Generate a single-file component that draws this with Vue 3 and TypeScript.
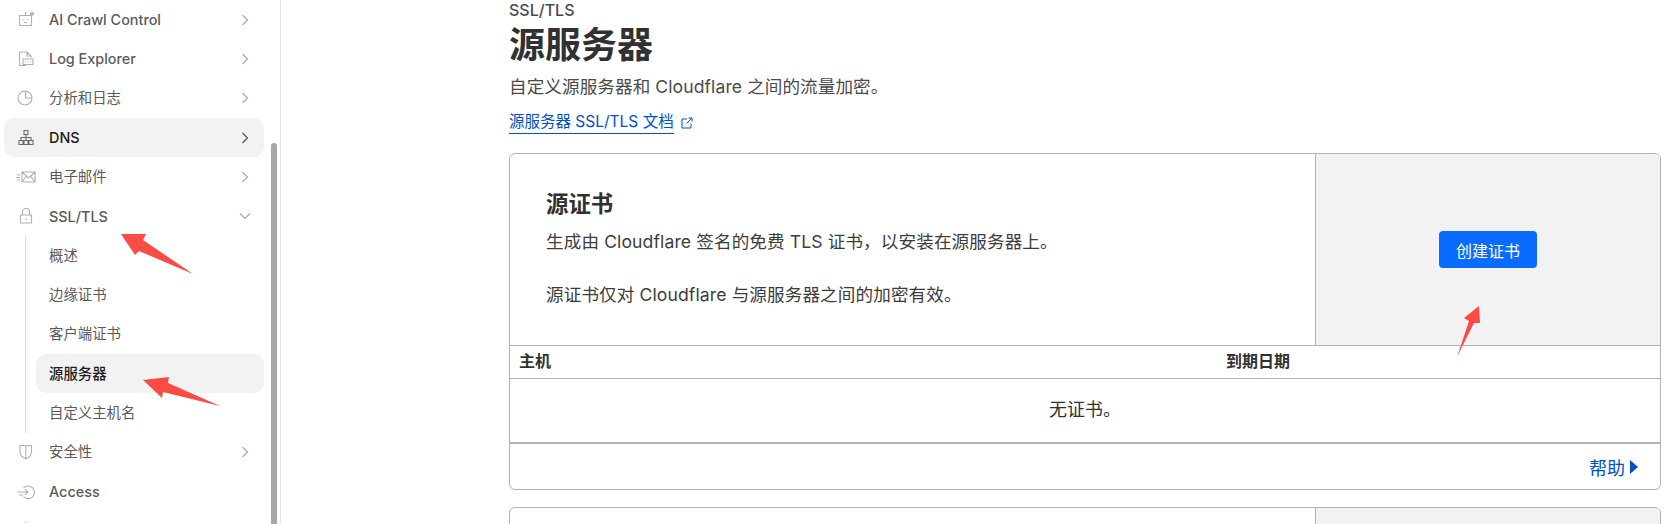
<template>
  <div class="page">
    <aside class="sidebar">
      <nav class="nav">
        <template v-for="item in navItems" :key="item.label">
          <a class="nav-row" :class="{ hover: item.hover }">
            <svg class="nav-icon" viewBox="0 0 20 20" fill="none">
              <path :d="item.icon" />
            </svg>
            <span class="nav-label" :class="{ cjk: isCjk(item.label) }">{{ item.label }}</span>
            <svg v-if="item.arrow" class="chev" :class="{ open: item.open }" viewBox="0 0 12 12" fill="none">
              <path d="M3.5 1 L8.5 6 L3.5 11" />
            </svg>
          </a>
          <div v-if="item.open" class="sub">
            <a v-for="s in subItems" :key="s" class="sub-row" :class="{ hover: s === '源服务器' }">{{ s }}</a>
          </div>
        </template>
      </nav>
      <div class="scroll-thumb"></div>
    </aside>

    <main class="main">
      <div class="crumb">SSL/TLS</div>
      <h1 class="title">源服务器</h1>
      <p class="desc">自定义源服务器和 Cloudflare 之间的流量加密。</p>
      <div class="doc-line">
        <a class="doc-link">源服务器 SSL/TLS 文档</a>
        <svg class="ext" viewBox="0 0 12 12" fill="none">
          <path d="M6 2 H1 V11 H10 V6.5 M5.5 6.5 L11 1 M7.5 1 H11 V4.5" />
        </svg>
      </div>

      <section class="card">
        <div class="card-top">
          <div class="card-info">
            <h2>源证书</h2>
            <p>生成由 Cloudflare 签名的免费 TLS 证书，以安装在源服务器上。</p>
            <p>源证书仅对 Cloudflare 与源服务器之间的加密有效。</p>
          </div>
          <div class="card-action">
            <button class="primary">创建证书</button>
          </div>
        </div>
        <div class="table-head">
          <span>主机</span>
          <span>到期日期</span>
        </div>
        <div class="table-empty">无证书。</div>
        <div class="card-foot">
          <a class="help">帮助<i class="tri"></i></a>
        </div>
      </section>

      <section class="card next">
        <div class="card-top">
          <div class="card-info"></div>
          <div class="card-action"></div>
        </div>
      </section>
    </main>

    <svg class="arrows" viewBox="0 0 1676 524">
      <polygon v-for="a in arrows" :key="a" :points="a" />
    </svg>
  </div>
</template>

<script setup lang="ts">
interface NavItem {
  label: string
  icon: string
  arrow?: boolean
  open?: boolean
  hover?: boolean
}

const navItems: NavItem[] = [
  {
    label: 'AI Crawl Control',
    arrow: true,
    icon: 'M3.5 5.5 H15.5 V15.5 H3.5 Z M9.5 5.5 V2 M7 9 V10 M12 9 V10 M8 12.5 H11 M16 1.5 V6 M14 3 L18 4.8 M18 3 L14 4.8',
  },
  {
    label: 'Log Explorer',
    arrow: true,
    icon: 'M10 16.5 H3.5 V3 H11 L15 7 V9 M11 3 V7 H15 M7 10 H17 V15.5 H7 Z M9 13 H10 M11.5 13 H12.5 M14 13 H15',
  },
  {
    label: '分析和日志',
    arrow: true,
    icon: 'M9 3 A7 7 0 1 0 16 10 A7 7 0 0 0 9 3 Z M9.5 3 V10 H16',
  },
  {
    label: 'DNS',
    arrow: true,
    hover: true,
    icon: 'M8 2.5 H12 V6.5 H8 Z M10 6.5 V12 M5 12 V9.5 H15 V12 M3 12.5 H7 V16.5 H3 Z M8 12.5 H12 V16.5 H8 Z M13 12.5 H17 V16.5 H13 Z',
  },
  {
    label: '电子邮件',
    arrow: true,
    icon: 'M6 5 H19 V15 H6 Z M6 5 L12.5 11 L19 5 M6 15 L10.5 9 M19 15 L14.5 9 M1 8 H4 M0 10.5 H4 M1 13 H4',
  },
  {
    label: 'SSL/TLS',
    arrow: true,
    open: true,
    icon: 'M4.5 9 H15.5 V17 H4.5 Z M6.5 9 V6 A3.5 3.5 0 0 1 13.5 6 V9 M10 12 V14',
  },
  {
    label: '安全性',
    arrow: true,
    icon: 'M4 3.5 H15.5 V10 C15.5 13 13 15.5 9.8 16.8 C6.5 15.5 4 13 4 10 Z M9.8 3.5 V16.8',
  },
  {
    label: 'Access',
    icon: 'M7.5 6 A6.3 6.3 0 1 1 7.5 14.5 M1 10 H12 M9 7.2 L12 10 L9 12.8 M3 13 H7',
  },
  {
    label: '',
    icon: 'M10 1 V2',
  },
]

const subItems = ['概述', '边缘证书', '客户端证书', '源服务器', '自定义主机名']

const isCjk = (text: string) => /[\u4e00-\u9fff]/.test(text)

// red annotation arrows drawn over the screenshot
const arrows = [
  '121,234 146,234 143,240 193,274 139,251 135,255',
  '143,380 169,377 168,383 220,406 163,392 162,398',
  '1479,306 1480,323 1474,323 1457,357 1469,321 1464,318',
]
</script>

<style>
html,
body {
  margin: 0;
  background: #fff;
}
</style>

<style scoped>
.page {
  position: relative;
  display: flex;
  width: 1676px;
  height: 524px;
  overflow: hidden;
  background: #fff;
  font-family: Inter, 'Noto Sans CJK SC', sans-serif;
  color: #313131;
}

.sidebar {
  position: relative;
  flex: none;
  width: 280px;
  border-right: 1px solid #e4e4e4;
  box-sizing: content-box;
  overflow: hidden;
}

.nav {
  display: flex;
  flex-direction: column;
  width: 260px;
  margin-left: 4px;
}

.nav-row {
  display: flex;
  align-items: center;
  height: 39.33px;
  flex: none;
  padding: 0 13px 0 12px;
  box-sizing: border-box;
  font-size: 14.4px;
  font-weight: 500;
  color: #5a5a5a;
  border-radius: 10px;
}

.nav-row.hover {
  color: #1d1d1d;
  background: #f2f2f2;
}

.nav-icon {
  flex: none;
  width: 20px;
  height: 20px;
  margin-right: 13px;
}

.nav-icon path {
  stroke: #b0b0b0;
  stroke-width: 1.1;
}

.nav-row.hover .nav-icon path {
  stroke: #6b6b6b;
}

.nav-label {
  flex: 1;
}

.nav-label.cjk {
  font-weight: 400;
  padding-bottom: 3px;
}

.chev {
  flex: none;
  width: 12px;
  height: 12px;
}

.chev path {
  stroke: #a8a8a8;
  stroke-width: 1.2;
}

.chev.open {
  transform: rotate(90deg);
}

.nav-row.hover .chev path {
  stroke: #555;
}

.sub {
  display: flex;
  flex-direction: column;
  margin-left: 21px;
  padding-left: 10px;
  border-left: 1px solid #dcdcdc;
}

.sub-row {
  display: flex;
  align-items: center;
  height: 39.33px;
  flex: none;
  box-sizing: border-box;
  padding: 0 0 3px 13px;
  font-size: 14.4px;
  color: #5a5a5a;
  border-radius: 10px;
}

.sub-row.hover {
  color: #1d1d1d;
  font-weight: 500;
  background: #f2f2f2;
}

.scroll-thumb {
  position: absolute;
  left: 271px;
  top: 143px;
  bottom: -8px;
  width: 6px;
  border-radius: 3px;
  background: #a6a6a6;
}

.main {
  flex: 1;
  padding: 1px 15px 0 228px;
  min-width: 0;
}

.crumb {
  font-size: 16px;
  font-weight: 500;
  line-height: 19px;
  color: #4a4a4a;
}

.title {
  margin: 2px 0 0;
  font-size: 36px;
  font-weight: 700;
  line-height: 47px;
  color: #313131;
}

.desc {
  margin: 5px 0 0;
  font-size: 17.6px;
  line-height: 26px;
  letter-spacing: 0.07px;
  color: #4a4a4a;
}

.doc-line {
  display: flex;
  align-items: center;
  margin-top: 10px;
  height: 25px;
}

.doc-link {
  font-size: 15.5px;
  line-height: 22px;
  color: #0051c3;
  border-bottom: 1px solid #0051c3;
}

.ext {
  width: 12px;
  height: 12px;
  margin-left: 7px;
}

.ext path {
  stroke: #0051c3;
  stroke-width: 1;
}

.card {
  margin-top: 18px;
  border: 1px solid #b3b3b3;
  border-radius: 6px;
  overflow: hidden;
}

.card.next {
  margin-top: 17px;
}

.card-top {
  display: flex;
  height: 191px;
}

.card-info {
  width: 769px;
  padding: 35px 0 0 36px;
  box-sizing: content-box;
}

.card-info h2 {
  margin: 0;
  font-size: 22.4px;
  font-weight: 700;
  line-height: 30px;
  color: #313131;
}

.card-info p {
  margin: 10px 0 0;
  font-size: 17.6px;
  line-height: 26px;
  letter-spacing: 0.1px;
  color: #3c3c3c;
}

.card-info p + p {
  margin-top: 27px;
}

.card-action {
  flex: 1;
  display: flex;
  align-items: center;
  justify-content: center;
  background: #f2f2f2;
  border-left: 1px solid #b3b3b3;
}

.primary {
  width: 98px;
  height: 37px;
  border: none;
  border-radius: 4px;
  background: #0a6cff;
  color: #fff;
  font-family: inherit;
  font-size: 16px;
}

.table-head {
  display: grid;
  grid-template-columns: 707px 1fr;
  align-items: center;
  height: 34px;
  padding: 0 0 5px 9px;
  box-sizing: border-box;
  border-top: 1px solid #b3b3b3;
  border-bottom: 1px solid #b3b3b3;
  font-size: 16px;
  font-weight: 700;
  color: #313131;
}

.table-empty {
  height: 65px;
  box-sizing: border-box;
  padding-bottom: 6px;
  display: flex;
  align-items: center;
  justify-content: center;
  border-bottom: 2px solid #b3b3b3;
  font-size: 18px;
  color: #313131;
}

.card-foot {
  display: flex;
  justify-content: flex-end;
  align-items: center;
  height: 45px;
  padding-right: 22px;
}

.help {
  display: flex;
  align-items: center;
  font-size: 18px;
  color: #0051c3;
}

.tri {
  width: 0;
  height: 0;
  margin-left: 5px;
  border-left: 8px solid #0051c3;
  border-top: 7px solid transparent;
  border-bottom: 7px solid transparent;
}

.arrows {
  position: absolute;
  left: 0;
  top: 0;
  width: 1676px;
  height: 524px;
  pointer-events: none;
}

.arrows polygon {
  fill: #fa4b45;
}
</style>
